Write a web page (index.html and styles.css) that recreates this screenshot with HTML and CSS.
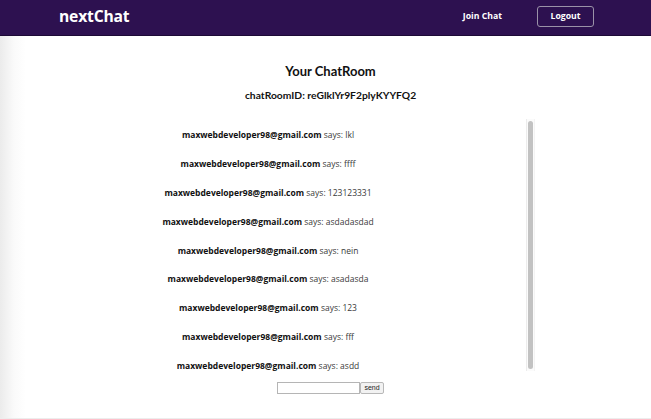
FILE: index.html
```html
<!DOCTYPE html>
<html>
<head>
<meta charset="utf-8">
<link rel="stylesheet" href="styles.css">
</head>
<body>
<header class="nav">
  <div class="logo">nextChat</div>
  <div class="links">
    <span class="join">Join Chat</span>
    <span class="logout">Logout</span>
  </div>
</header>
<main class="page">
  <h1 class="title">Your ChatRoom</h1>
  <h2 class="room">chatRoomID: reGlklYr9F2plyKYYFQ2</h2>
  <div class="chatbox">
    <div class="messages">
      <p class="msg"><b>maxwebdeveloper98@gmail.com</b> says: lkl</p>
      <p class="msg"><b>maxwebdeveloper98@gmail.com</b> says: ffff</p>
      <p class="msg"><b>maxwebdeveloper98@gmail.com</b> says: 123123331</p>
      <p class="msg"><b>maxwebdeveloper98@gmail.com</b> says: asdadasdad</p>
      <p class="msg"><b>maxwebdeveloper98@gmail.com</b> says: nein</p>
      <p class="msg"><b>maxwebdeveloper98@gmail.com</b> says: asadasda</p>
      <p class="msg"><b>maxwebdeveloper98@gmail.com</b> says: 123</p>
      <p class="msg"><b>maxwebdeveloper98@gmail.com</b> says: fff</p>
      <p class="msg"><b>maxwebdeveloper98@gmail.com</b> says: asdd</p>
    </div>
    <div class="scrollbar"><div class="thumb"></div></div>
  </div>
  <form class="send-form">
    <input class="send-input" type="text"><button class="send-btn" type="button">send</button>
  </form>
</main>
</body>
</html>
```
FILE: styles.css
```css
* { box-sizing: border-box; }
html, body { margin: 0; padding: 0; }
body {
  width: 651px;
  height: 419px;
  overflow: hidden;
  background: #fff;
  font-family: "Open Sans", sans-serif;
}
.nav {
  height: 36px;
  background: #2d1150;
  border-bottom: 1px solid #1d0a36;
  display: flex;
  align-items: center;
  justify-content: space-between;
  padding: 0 57px 0 59px;
}
.logo {
  color: #fff;
  font-weight: 700;
  font-size: 15.7px;
  letter-spacing: -0.2px;
  margin-top: -3px;
}
.links {
  display: flex;
  align-items: center;
  gap: 35px;
  margin-top: -3px;
}
.join {
  color: #fff;
  font-weight: 700;
  font-size: 8.7px;
}
.logout {
  color: #fff;
  font-weight: 700;
  font-size: 8.7px;
  border: 1.5px solid #9a92a8;
  border-radius: 3px;
  width: 57px;
  height: 21px;
  display: flex;
  align-items: center;
  justify-content: center;
}
.page {
  height: 383px;
  background: linear-gradient(to right, #ebebeb 0, #fafafa 14px, #fff 26px);
  border-bottom: 1px solid #ededed;
  display: flex;
  flex-direction: column;
  align-items: flex-start;
  padding-top: 26px;
}
.title {
  font-family: Lato, sans-serif;
  font-weight: 700;
  font-size: 13px;
  color: #111;
  margin: 0;
  align-self: center;
  padding-left: 10px;
  line-height: 18px;
}
.room {
  font-family: Lato, sans-serif;
  font-weight: 700;
  font-size: 10.3px;
  color: #111;
  margin: 8px 0 0 0;
  align-self: center;
  padding-left: 10px;
  line-height: 14px;
}
.chatbox {
  margin: 17px 0 0 40px;
  width: 495px;
  height: 252px;
  display: flex;
}
.messages {
  flex: 1;
  overflow: hidden;
  display: flex;
  flex-direction: column;
  padding: 2px 30px 0 0;
}
.scrollbar {
  width: 9px;
  background: #fbfbfb;
  border-left: 1px solid #ececec;
  border-right: 1px solid #f3f3f3;
  padding: 2px 1px;
  display: flex;
}
.thumb {
  flex: 1;
  background: #c2c2c2;
  border-radius: 3px;
}
.msg {
  margin: 0;
  height: 28.9px;
  flex: none;
  line-height: 28.9px;
  text-align: center;
  font-size: 8.5px;
  color: #3a3a3a;
}
.msg b { color: #111; font-weight: 700; }
.send-form {
  align-self: center;
  margin: 11px 0 0 0;
  padding-left: 10px;
  display: flex;
}
.send-input {
  width: 83px;
  height: 12px;
  border: 1px solid #b5b5b5;
  padding: 0;
  margin: 0;
}
.send-btn {
  width: 24px;
  height: 12px;
  padding: 0;
  margin: 0;
  font-family: "Liberation Sans", sans-serif;
  font-size: 7px;
  line-height: 10px;
  background: #f2f2f2;
  border: 1px solid #b8b8b8;
  border-radius: 2px;
  color: #222;
}
```
